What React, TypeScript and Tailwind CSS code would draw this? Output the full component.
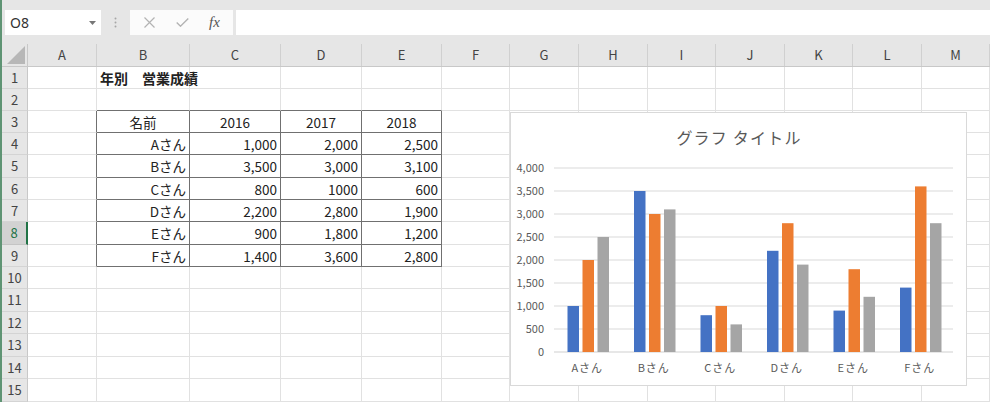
const COLS = ["A", "B", "C", "D", "E", "F", "G", "H", "I", "J", "K", "L", "M"];
const COL_W = [
  "w-[69px]", "w-[93px]", "w-[91px]", "w-[81px]", "w-[80px]", "w-[68px]", "w-[69px]",
  "w-[69px]", "w-[68px]", "w-[69px]", "w-[68px]", "w-[69px]", "w-[68px]",
];
const ROW_H = [22, 22, 22, 22, 23, 22, 22, 23, 22, 22, 23, 22, 23, 22, 23];

const HEADER = ["名前", "2016", "2017", "2018"];
const TABLE = [
  ["Aさん", "1,000", "2,000", "2,500"],
  ["Bさん", "3,500", "3,000", "3,100"],
  ["Cさん", "800", "1000", "600"],
  ["Dさん", "2,200", "2,800", "1,900"],
  ["Eさん", "900", "1,800", "1,200"],
  ["Fさん", "1,400", "3,600", "2,800"],
];
const CHART = [
  { name: "Aさん", v: [1000, 2000, 2500] },
  { name: "Bさん", v: [3500, 3000, 3100] },
  { name: "Cさん", v: [800, 1000, 600] },
  { name: "Dさん", v: [2200, 2800, 1900] },
  { name: "Eさん", v: [900, 1800, 1200] },
  { name: "Fさん", v: [1400, 3600, 2800] },
];
const BAR_COLORS = ["#4472c4", "#ed7d31", "#a5a5a5"];

function FormulaBar() {
  return (
    <div className="h-[44px] bg-[#e6e6e6] pt-[10px] flex items-start">
      <div className="ml-[3px] w-[96px] h-[25px] bg-white flex items-center justify-between pl-[5px] pr-[5px]">
        <span className="text-[14px] text-[#333] font-['Noto_Sans',sans-serif]">O8</span>
        <svg width="7" height="4" viewBox="0 0 7 4">
          <polygon points="0,0 7,0 3.5,4" fill="#777" />
        </svg>
      </div>
      <div className="w-[29px] h-[25px] flex items-center justify-center">
        <svg width="3" height="11" viewBox="0 0 3 11">
          <circle cx="1.5" cy="1.5" r="1" fill="#a6a6a6" />
          <circle cx="1.5" cy="5.5" r="1" fill="#a6a6a6" />
          <circle cx="1.5" cy="9.5" r="1" fill="#a6a6a6" />
        </svg>
      </div>
      <div className="w-[103px] h-[25px] bg-[#fbfbfb] flex items-center">
        <div className="w-[38px] flex justify-center">
          <svg width="11" height="11" viewBox="0 0 11 11">
            <path d="M0.5 0.5 L10.5 10.5 M10.5 0.5 L0.5 10.5" stroke="#b3b3b3" strokeWidth="1.2" />
          </svg>
        </div>
        <div className="w-[28px] flex justify-center">
          <svg width="13" height="9" viewBox="0 0 13 9">
            <path d="M0.7 4.5 L4.5 8.2 L12.3 0.6" stroke="#b3b3b3" strokeWidth="1.4" fill="none" />
          </svg>
        </div>
        <div className="w-[37px] flex justify-center">
          <span className="italic text-[15px] text-[#555] font-['Liberation_Serif',serif]">fx</span>
        </div>
      </div>
      <div className="ml-[3px] flex-1 h-[25px] bg-white" />
    </div>
  );
}

function ColumnHeaders() {
  return (
    <div className="flex h-[23px] bg-[#e6e6e6] border-b border-[#c8c8c8]">
      <div className="w-[26px] border-r border-[#c8c8c8] flex items-end justify-end pr-[2px] pb-[2px]">
        <svg width="18" height="18" viewBox="0 0 18 18">
          <polygon points="18,0 18,18 0,18" fill="#b7b7b7" />
        </svg>
      </div>
      {COLS.map((c, i) => (
        <div
          key={c}
          className={`${COL_W[i]} shrink-0 border-r border-[#d0d0d0] flex items-center justify-center text-[13px] text-[#444]`}
        >
          {c}
        </div>
      ))}
    </div>
  );
}

function cellFor(r: number, c: number) {
  if (r === 1 && c === 1) return { text: "年別　営業成績", align: "justify-start pl-[3px]", bold: true };
  if (r === 3 && c >= 1 && c <= 4) return { text: HEADER[c - 1], align: "justify-center", bold: false };
  if (r >= 4 && r <= 9 && c >= 1 && c <= 4)
    return { text: TABLE[r - 4][c - 1], align: "justify-end pr-[3px]", bold: false };
  return null;
}

function Row({ r }: { r: number }) {
  const selected = r === 8;
  const h = ROW_H[r - 1] === 23 ? "h-[23px]" : "h-[22px]";
  return (
    <div className={`flex ${h}`}>
      <div
        className={`w-[26px] shrink-0 flex items-center justify-center text-[13px] border-b ${
          selected
            ? "bg-[#d2d2d2] text-[#217346] border-r-2 border-r-[#217346] border-b-[#c4c4c4]"
            : "bg-[#e6e6e6] text-[#444] border-r border-r-[#c8c8c8] border-b-[#d4d4d4]"
        }`}
      >
        {r}
      </div>
      {COLS.map((col, c) => {
        const inTable = r >= 3 && r <= 9 && c >= 1 && c <= 4;
        const darkRight = inTable || (c === 0 && r >= 3 && r <= 9);
        const darkBottom = inTable || (r === 2 && c >= 1 && c <= 4);
        const cell = cellFor(r, c);
        return (
          <div
            key={col}
            className={`${COL_W[c]} shrink-0 border-r border-b flex items-center whitespace-nowrap overflow-visible ${
              darkRight ? "border-r-[#707070]" : "border-r-[#e1e1e1]"
            } ${darkBottom ? "border-b-[#707070]" : "border-b-[#e1e1e1]"} ${cell ? cell.align : ""}`}
          >
            {cell && (
              <span className={`${cell.bold ? "font-bold text-[14px]" : "text-[13.5px]"} text-[#222] leading-[18px]`}>
                {cell.text}
              </span>
            )}
          </div>
        );
      })}
    </div>
  );
}

function Chart() {
  const x0 = 43;
  const x1 = 442;
  const yZero = 239;
  const scale = 184 / 4000;
  const slot = (x1 - x0) / 6;
  const ticks = [0, 500, 1000, 1500, 2000, 2500, 3000, 3500, 4000];
  return (
    <div className="absolute left-[508px] top-[112px] w-[457px] h-[274px] bg-white border border-[#d9d9d9]">
      <svg width="455" height="272" viewBox="0 0 455 272" className="block">
        <text x="228" y="31" textAnchor="middle" fontSize="16" letterSpacing="1.2" fill="#595959">
          グラフ タイトル
        </text>
        {ticks.map((t) => {
          const y = yZero - t * scale;
          return (
            <g key={t}>
              <line x1={x0} x2={x1} y1={y} y2={y} stroke={t === 0 ? "#cfcfcf" : "#d9d9d9"} strokeWidth="1" />
              <text x="33" y={y + 4} textAnchor="end" fontSize="11" fill="#595959">
                {t.toLocaleString("en-US")}
              </text>
            </g>
          );
        })}
        {CHART.map((g, i) => {
          const cx = x0 + slot * (i + 0.5);
          return (
            <g key={g.name}>
              {g.v.map((v, j) => {
                const h = v * scale;
                return (
                  <rect
                    key={j}
                    x={cx - 19.75 + j * 15}
                    y={yZero - h}
                    width="11.5"
                    height={h}
                    fill={BAR_COLORS[j]}
                  />
                );
              })}
              <text x={cx} y="259" textAnchor="middle" fontSize="11" letterSpacing="1" fill="#595959">
                {g.name}
              </text>
            </g>
          );
        })}
      </svg>
    </div>
  );
}

export default function App() {
  const rows = Array.from({ length: 15 }, (_, i) => i + 1);
  return (
    <div className="relative w-[990px] h-[402px] overflow-hidden bg-white border-l-2 border-[#5f9474] font-['Noto_Sans_CJK_JP',sans-serif]">
      <FormulaBar />
      <ColumnHeaders />
      {rows.map((r) => (
        <Row key={r} r={r} />
      ))}
      <Chart />
    </div>
  );
}
